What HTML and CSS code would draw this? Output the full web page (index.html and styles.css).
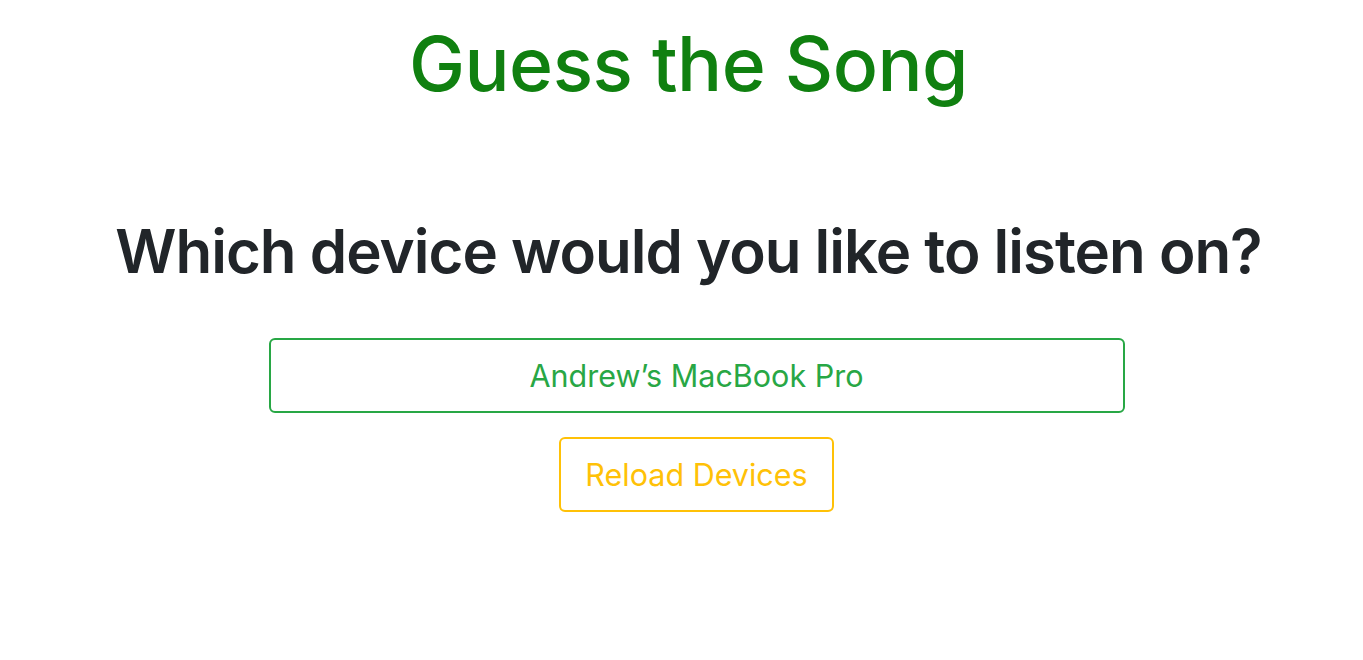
FILE: index.html
```html
<!DOCTYPE html>
<html lang="en">
<head>
<meta charset="utf-8">
<title>Guess the Song</title>
<link rel="stylesheet" href="styles.css">
</head>
<body>
<main class="page">
  <h1 class="title">Guess the Song</h1>
  <h2 class="question">Which device would you like to listen on?</h2>
  <div class="devices">
    <button class="btn btn-device">Andrew’s MacBook Pro</button>
    <button class="btn btn-reload">Reload Devices</button>
  </div>
</main>
</body>
</html>
```

FILE: styles.css
```css
html, body {
  margin: 0;
  padding: 0;
  background: #ffffff;
}

body {
  font-family: Inter, "Noto Sans", "Liberation Sans", sans-serif;
  color: #212529;
}

.page {
  display: flex;
  flex-direction: column;
  align-items: center;
  padding-left: 14px;
}

.title {
  margin: 16px 0 0;
  font-size: 75px;
  line-height: 96px;
  font-weight: 500;
  color: #108010;
  letter-spacing: -0.5px;
}

.question {
  margin: 102px 0 0;
  font-size: 60px;
  line-height: 74px;
  font-weight: 600;
  color: #212529;
  letter-spacing: -1px;
}

.devices {
  display: flex;
  flex-direction: column;
  align-items: center;
  gap: 24px;
  margin-top: 50px;
  margin-left: 16px;
}

.btn {
  font-family: inherit;
  background: #ffffff;
  border-radius: 6px;
  border: 2px solid;
  height: 75px;
  font-size: 30.5px;
  font-weight: 400;
  cursor: pointer;
}

.btn-device {
  width: 856px;
  color: #28a745;
  border-color: #28a745;
}

.btn-reload {
  padding: 0 24px;
  color: #ffc107;
  border-color: #ffc107;
}
```
